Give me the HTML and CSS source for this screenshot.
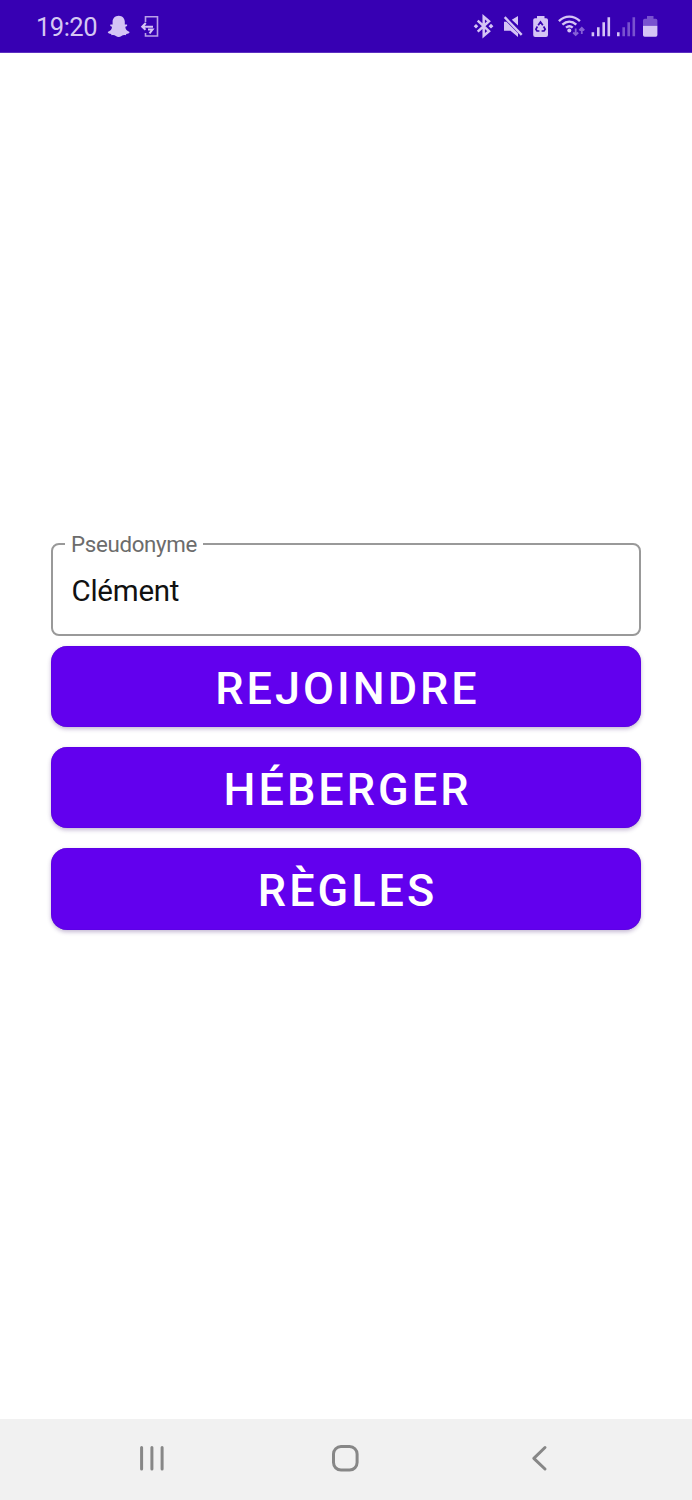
FILE: index.html
```html
<!DOCTYPE html>
<html lang="fr">
<head>
<meta charset="utf-8">
<title>Accueil</title>
<link rel="stylesheet" href="styles.css">
</head>
<body>
<div class="screen">
  <header class="status-bar">
    <span class="clock">19:20</span>
    <svg class="status-left" viewBox="106 12 56 28" width="56" height="28">
      <path class="solid" d="M118.700 15.700C122.500 15.700 124.800 18.500 124.800 21.500V24.500Q126 24.700 127 24.400C127.800 25.500 126.500 26.200 125.300 26.700C125.300 29 127 31 129.600 31.900C129.700 33.200 127.500 33.600 126.400 33.900L125.700 35.200C124 34.900 122.700 35.100 121.500 36C119.700 37.400 117.600 37.400 115.900 36C114.700 35.100 113.300 34.900 111.700 35.200L111 33.900C109.900 33.600 107.700 33.200 107.700 31.900C110.400 31 112 29 112 26.700C110.800 26.200 109.600 25.500 110.400 24.400Q111.400 24.700 112.600 24.500V21.500C112.600 18.500 114.900 15.700 118.700 15.700Z"/>
      <path class="exit-frame" d="M145.500 22V16.800H157.500V36H145.500V33"/>
      <path class="exit-arrows" d="M145.800 23L142.200 26.700L145.500 29.800M142.200 26.700H153M148 29.500H152.500L149.500 33.300"/>
    </svg>
    <svg class="status-right" viewBox="470 12 192 28" width="192" height="28">
      <path class="bluetooth" d="M477.700 20.700L489 31.200L483.700 35.700V16.700L489 21.200L477.700 31.700"/>
      <path class="solid" d="M473.700 26.200L476 23.900L478.300 26.200L476 28.500ZM488.600 26.200L491 23.800L493.400 26.200L491 28.600Z"/>
      <path class="solid" d="M504 21.800H506.500L518 33.300V37L510.500 30.800H504ZM518 16V25.600L511.800 19.800Z"/>
      <path class="mute-slash" d="M504.700 17.200L521.700 34.800"/>
      <path class="solid" d="M537 16H544.500V18.200H546.200Q548 18.200 548 20V35Q548 37 546 37H535.200Q533.200 37 533.200 35V20Q533.200 18.200 535 18.200H537Z"/>
      <path class="recycle" d="M538.200 25.300L540.500 21.900L542.800 25.300M543.600 26.500L545.200 29.200L544 31H541.600M539.400 31H537L535.900 29.200L537.400 26.500"/>
      <path class="wifi" d="M558.900 21.100C565.200 15.100 573.500 15.100 579.900 21.100M562.400 24.600C566.700 20.700 572 20.700 576.300 24.600M566 27.700C568.200 25.800 570.600 25.800 572.700 27.700"/>
      <circle class="solid" cx="569.300" cy="30.600" r="2"/>
      <path class="traffic" d="M575.700 28.500V34.800M573.200 32.500L575.700 35L578.200 32.500M581.800 34V28M579.300 30.300L581.800 27.800L584.300 30.300"/>
      <path class="bars" d="M592.900 32.300V36.200M598.300 27.300V36.200M603.700 22.300V36.200M608.800 17.300V36.200M618.300 32.300V36.200"/>
      <path class="bars faint" d="M623.700 27.300V36.200M628.700 22.300V36.200M633.800 17.300V36.200"/>
      <path class="solid faint" d="M647 16H653.500V18.700H655.700Q657.400 18.700 657.400 20.400V25.700H643V20.400Q643 18.700 644.700 18.700H647Z"/>
      <path class="solid" d="M643 25.700H657.400V35Q657.400 36.700 655.700 36.700H644.700Q643 36.700 643 35Z"/>
    </svg>
  </header>
  <main class="content">
    <fieldset class="field">
      <legend class="field-label">Pseudonyme</legend>
      <div class="field-value">Clément</div>
    </fieldset>
    <button class="action">REJOINDRE</button>
    <button class="action">HÉBERGER</button>
    <button class="action">RÈGLES</button>
  </main>
  <nav class="nav-bar">
    <svg class="nav-icon" viewBox="0 0 32 32" width="32" height="32"><path d="M5.600 5.500V27M15.900 5.500V27M26.100 5.500V27"/></svg>
    <svg class="nav-icon" viewBox="0 0 32 32" width="32" height="32"><rect x="3.500" y="4.500" width="23.600" height="23.600" rx="7.500"/></svg>
    <svg class="nav-icon" viewBox="0 0 32 32" width="32" height="32"><path d="M21 5.500L9.800 16.300L21 27"/></svg>
  </nav>
</div>
</body>
</html>
```
FILE: styles.css
```css
* { box-sizing: border-box; }
body {
  margin: 0;
  font-family: Roboto, "Liberation Sans", sans-serif;
  background: #fff;
}
.screen {
  display: flex;
  flex-direction: column;
  height: 1500px;
}
.status-bar {
  display: flex;
  align-items: center;
  height: 53px;
  padding: 0 30px 0 36px;
  background: #3700b3;
  border-bottom: 1px solid #5c30c1;
}
.clock {
  width: 70px;
  font-size: 25.500px;
  line-height: 30px;
  letter-spacing: -0.500px;
  padding-top: 1px;
  color: #d5c8f2;
}
.status-right { margin-left: auto; }
.solid { fill: #d5c4f5; }
.exit-frame, .exit-arrows, .bluetooth, .mute-slash, .recycle, .wifi, .traffic, .bars {
  fill: none;
  stroke: #d5c4f5;
}
.exit-frame { stroke-width: 1.600px; stroke: #b9a0e8; }
.exit-arrows { stroke-width: 2px; }
.bluetooth { stroke-width: 2.500px; }
.mute-slash { stroke-width: 2.400px; }
.recycle { stroke: #3700b3; stroke-width: 1.700px; }
.wifi { stroke-width: 2.400px; }
.traffic { stroke: #8660d6; stroke-width: 1.800px; }
.bars { stroke-width: 2.600px; stroke-linecap: butt; }
.faint { opacity: 0.420; }
.content {
  flex: 1;
  display: flex;
  flex-direction: column;
  padding: 480px 51px 0;
}
.field {
  height: 103px;
  margin: 0;
  padding: 0 0 0 13px;
  border: 2px solid #999;
  border-radius: 8px;
}
.field-label {
  padding: 1px 6px 0 6px;
  margin-left: -1px;
  font-size: 22.300px;
  line-height: 21px;
  letter-spacing: -0.320px;
  color: #6c6c6c;
}
.field-value {
  padding: 18px 0 0 5.500px;
  font-size: 29.500px;
  line-height: 36px;
  letter-spacing: -0.250px;
  color: #111;
}
.action {
  height: 81.500px;
  margin: 9.500px 0 0;
  padding: 5px 0 0 3px;
  border: 0;
  border-radius: 16px;
  background: #6200ee;
  box-shadow: 0 2px 4px rgba(60, 20, 110, 0.300), inset 0 0 1px #3b00a8;
  color: #fff;
  font: 500 45px/54px Roboto, "Liberation Sans", sans-serif;
  letter-spacing: 3px;
}
.action + .action { margin-top: 19.800px; }
.nav-bar {
  display: flex;
  justify-content: space-between;
  height: 81px;
  padding: 23px 136px 0;
  background: #f1f1f1;
}
.nav-icon {
  fill: none;
  stroke: #878787;
  stroke-width: 3px;
  stroke-linecap: round;
  stroke-linejoin: round;
}
```
